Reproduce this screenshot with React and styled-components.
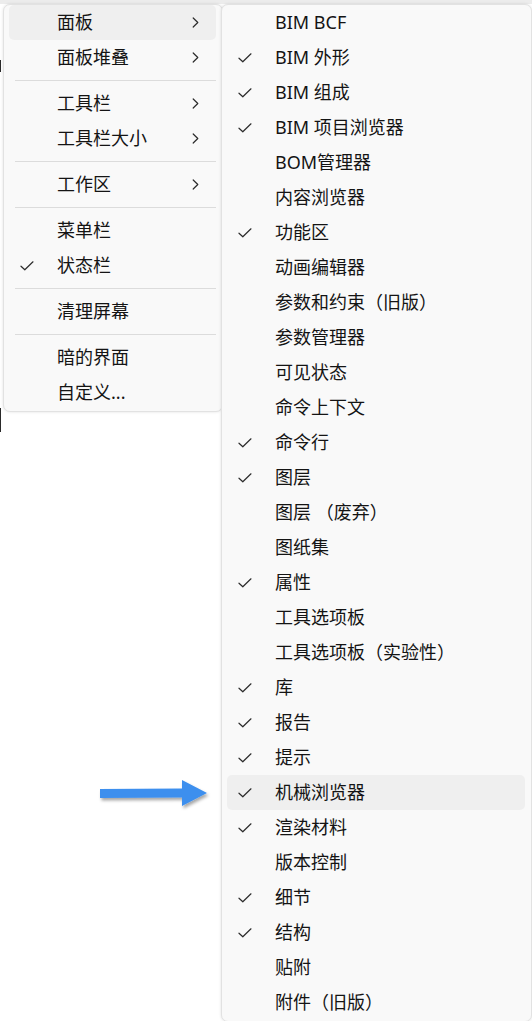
import React from "react";
import styled, { createGlobalStyle } from "styled-components";

const Global = createGlobalStyle`
  html, body { margin: 0; padding: 0; background: #ffffff; }
  body { font-family: "Noto Sans", "Noto Sans CJK SC", sans-serif; }
`;

const Page = styled.div`
  position: relative;
  width: 532px;
  height: 1021px;
  overflow: hidden;
  background: #ffffff;
  display: flex;
  align-items: flex-start;
  padding: 4px 0 0 3px;
  box-sizing: border-box;
`;

const TopBand = styled.div`
  position: absolute;
  left: 0;
  top: 0;
  width: 532px;
  height: 4px;
  background: #ececec;
`;

const EdgeMark = styled.div`
  position: absolute;
  left: 0;
  top: ${(p) => p.$top}px;
  width: 1px;
  height: ${(p) => p.$h}px;
  background: #2a2a2a;
`;

const Menu = styled.div`
  position: relative;
  background: #f9f9f9;
  border: 1px solid #e2e2e2;
  border-radius: 7px;
  box-shadow: 0 0 3px rgba(0, 0, 0, 0.12);
  box-sizing: border-box;
  padding: 0 0 1px 0;
  display: flex;
  flex-direction: column;
  flex: ${(p) => (p.$grow ? "1" : "none")};
  width: ${(p) => (p.$grow ? "auto" : "220px")};
  margin-left: ${(p) => (p.$overlap ? "-2px" : "0")};
  z-index: ${(p) => (p.$overlap ? 1 : 0)};
`;

const Row = styled.div`
  height: 35px;
  margin: 0 6px 0 5px;
  border-radius: 5px;
  background: ${(p) => (p.$active ? "#efefef" : "transparent")};
  display: grid;
  grid-template-columns: 48px 1fr 24px;
  align-items: center;
  color: #141414;
  font-size: 18px;
  font-family: "Noto Sans", "Noto Sans CJK SC", sans-serif;
  white-space: nowrap;
`;

const CheckCell = styled.span`
  display: flex;
  align-items: center;
  padding-left: 11px;
`;

const Label = styled.span`
  line-height: 35px;
`;

const Chevron = styled.span`
  display: flex;
  align-items: center;
`;

const Separator = styled.div`
  height: 1px;
  margin: 5px 6px 5px 11px;
  background: #dcdcdc;
`;

const Arrow = styled.svg`
  position: absolute;
  left: 96px;
  top: 776px;
  overflow: visible;
`;

const Check = () => (
  <svg width="14" height="10" viewBox="0 0 14 10">
    <path d="M1 5.2 L4.8 8.8 L13 0.8" fill="none" stroke="#2b2b2b" strokeWidth="1.2" strokeLinecap="round" strokeLinejoin="round" />
  </svg>
);

const ChevronIcon = () => (
  <svg width="7" height="11" viewBox="0 0 7 11">
    <path d="M1.2 1 L5.8 5.5 L1.2 10" fill="none" stroke="#2b2b2b" strokeWidth="1.2" strokeLinecap="round" strokeLinejoin="round" />
  </svg>
);

const leftItems = [
  { t: "面板", sub: true, active: true },
  { t: "面板堆叠", sub: true },
  "sep",
  { t: "工具栏", sub: true },
  { t: "工具栏大小", sub: true },
  "sep",
  { t: "工作区", sub: true },
  "sep",
  { t: "菜单栏" },
  { t: "状态栏", check: true },
  "sep",
  { t: "清理屏幕" },
  "sep",
  { t: "暗的界面" },
  { t: "自定义..." },
];

const rightItems = [
  { t: "BIM BCF" },
  { t: "BIM 外形", check: true },
  { t: "BIM 组成", check: true },
  { t: "BIM 项目浏览器", check: true },
  { t: "BOM管理器" },
  { t: "内容浏览器" },
  { t: "功能区", check: true },
  { t: "动画编辑器" },
  { t: "参数和约束（旧版）" },
  { t: "参数管理器" },
  { t: "可见状态" },
  { t: "命令上下文" },
  { t: "命令行", check: true },
  { t: "图层", check: true },
  { t: "图层 （废弃）" },
  { t: "图纸集" },
  { t: "属性", check: true },
  { t: "工具选项板" },
  { t: "工具选项板（实验性）" },
  { t: "库", check: true },
  { t: "报告", check: true },
  { t: "提示", check: true },
  { t: "机械浏览器", check: true, active: true },
  { t: "渲染材料", check: true },
  { t: "版本控制" },
  { t: "细节", check: true },
  { t: "结构", check: true },
  { t: "贴附" },
  { t: "附件（旧版）" },
];

const MenuItems = ({ items }) =>
  items.map((it, i) =>
    it === "sep" ? (
      <Separator key={i} />
    ) : (
      <Row key={i} $active={it.active}>
        <CheckCell>{it.check ? <Check /> : null}</CheckCell>
        <Label>{it.t}</Label>
        <Chevron>{it.sub ? <ChevronIcon /> : null}</Chevron>
      </Row>
    )
  );

export default function App() {
  return (
    <>
      <Global />
      <Page>
        <TopBand />
        <EdgeMark $top={60} $h={12} />
        <EdgeMark $top={408} $h={24} />
        <Menu>
          <MenuItems items={leftItems} />
        </Menu>
        <Menu $grow $overlap>
          <MenuItems items={rightItems} />
        </Menu>
        <Arrow width="116" height="34" viewBox="0 0 116 34">
          <defs>
            <filter id="sh" x="-20%" y="-50%" width="140%" height="200%">
              <feDropShadow dx="1.5" dy="2.5" stdDeviation="1.6" floodColor="#000" floodOpacity="0.35" />
            </filter>
          </defs>
          <path
            d="M4 13 L86 12.5 L86 4 L111 17 L86 30 L86 21.5 L4 22 Z"
            fill="#3d8fee"
            filter="url(#sh)"
          />
        </Arrow>
      </Page>
    </>
  );
}
